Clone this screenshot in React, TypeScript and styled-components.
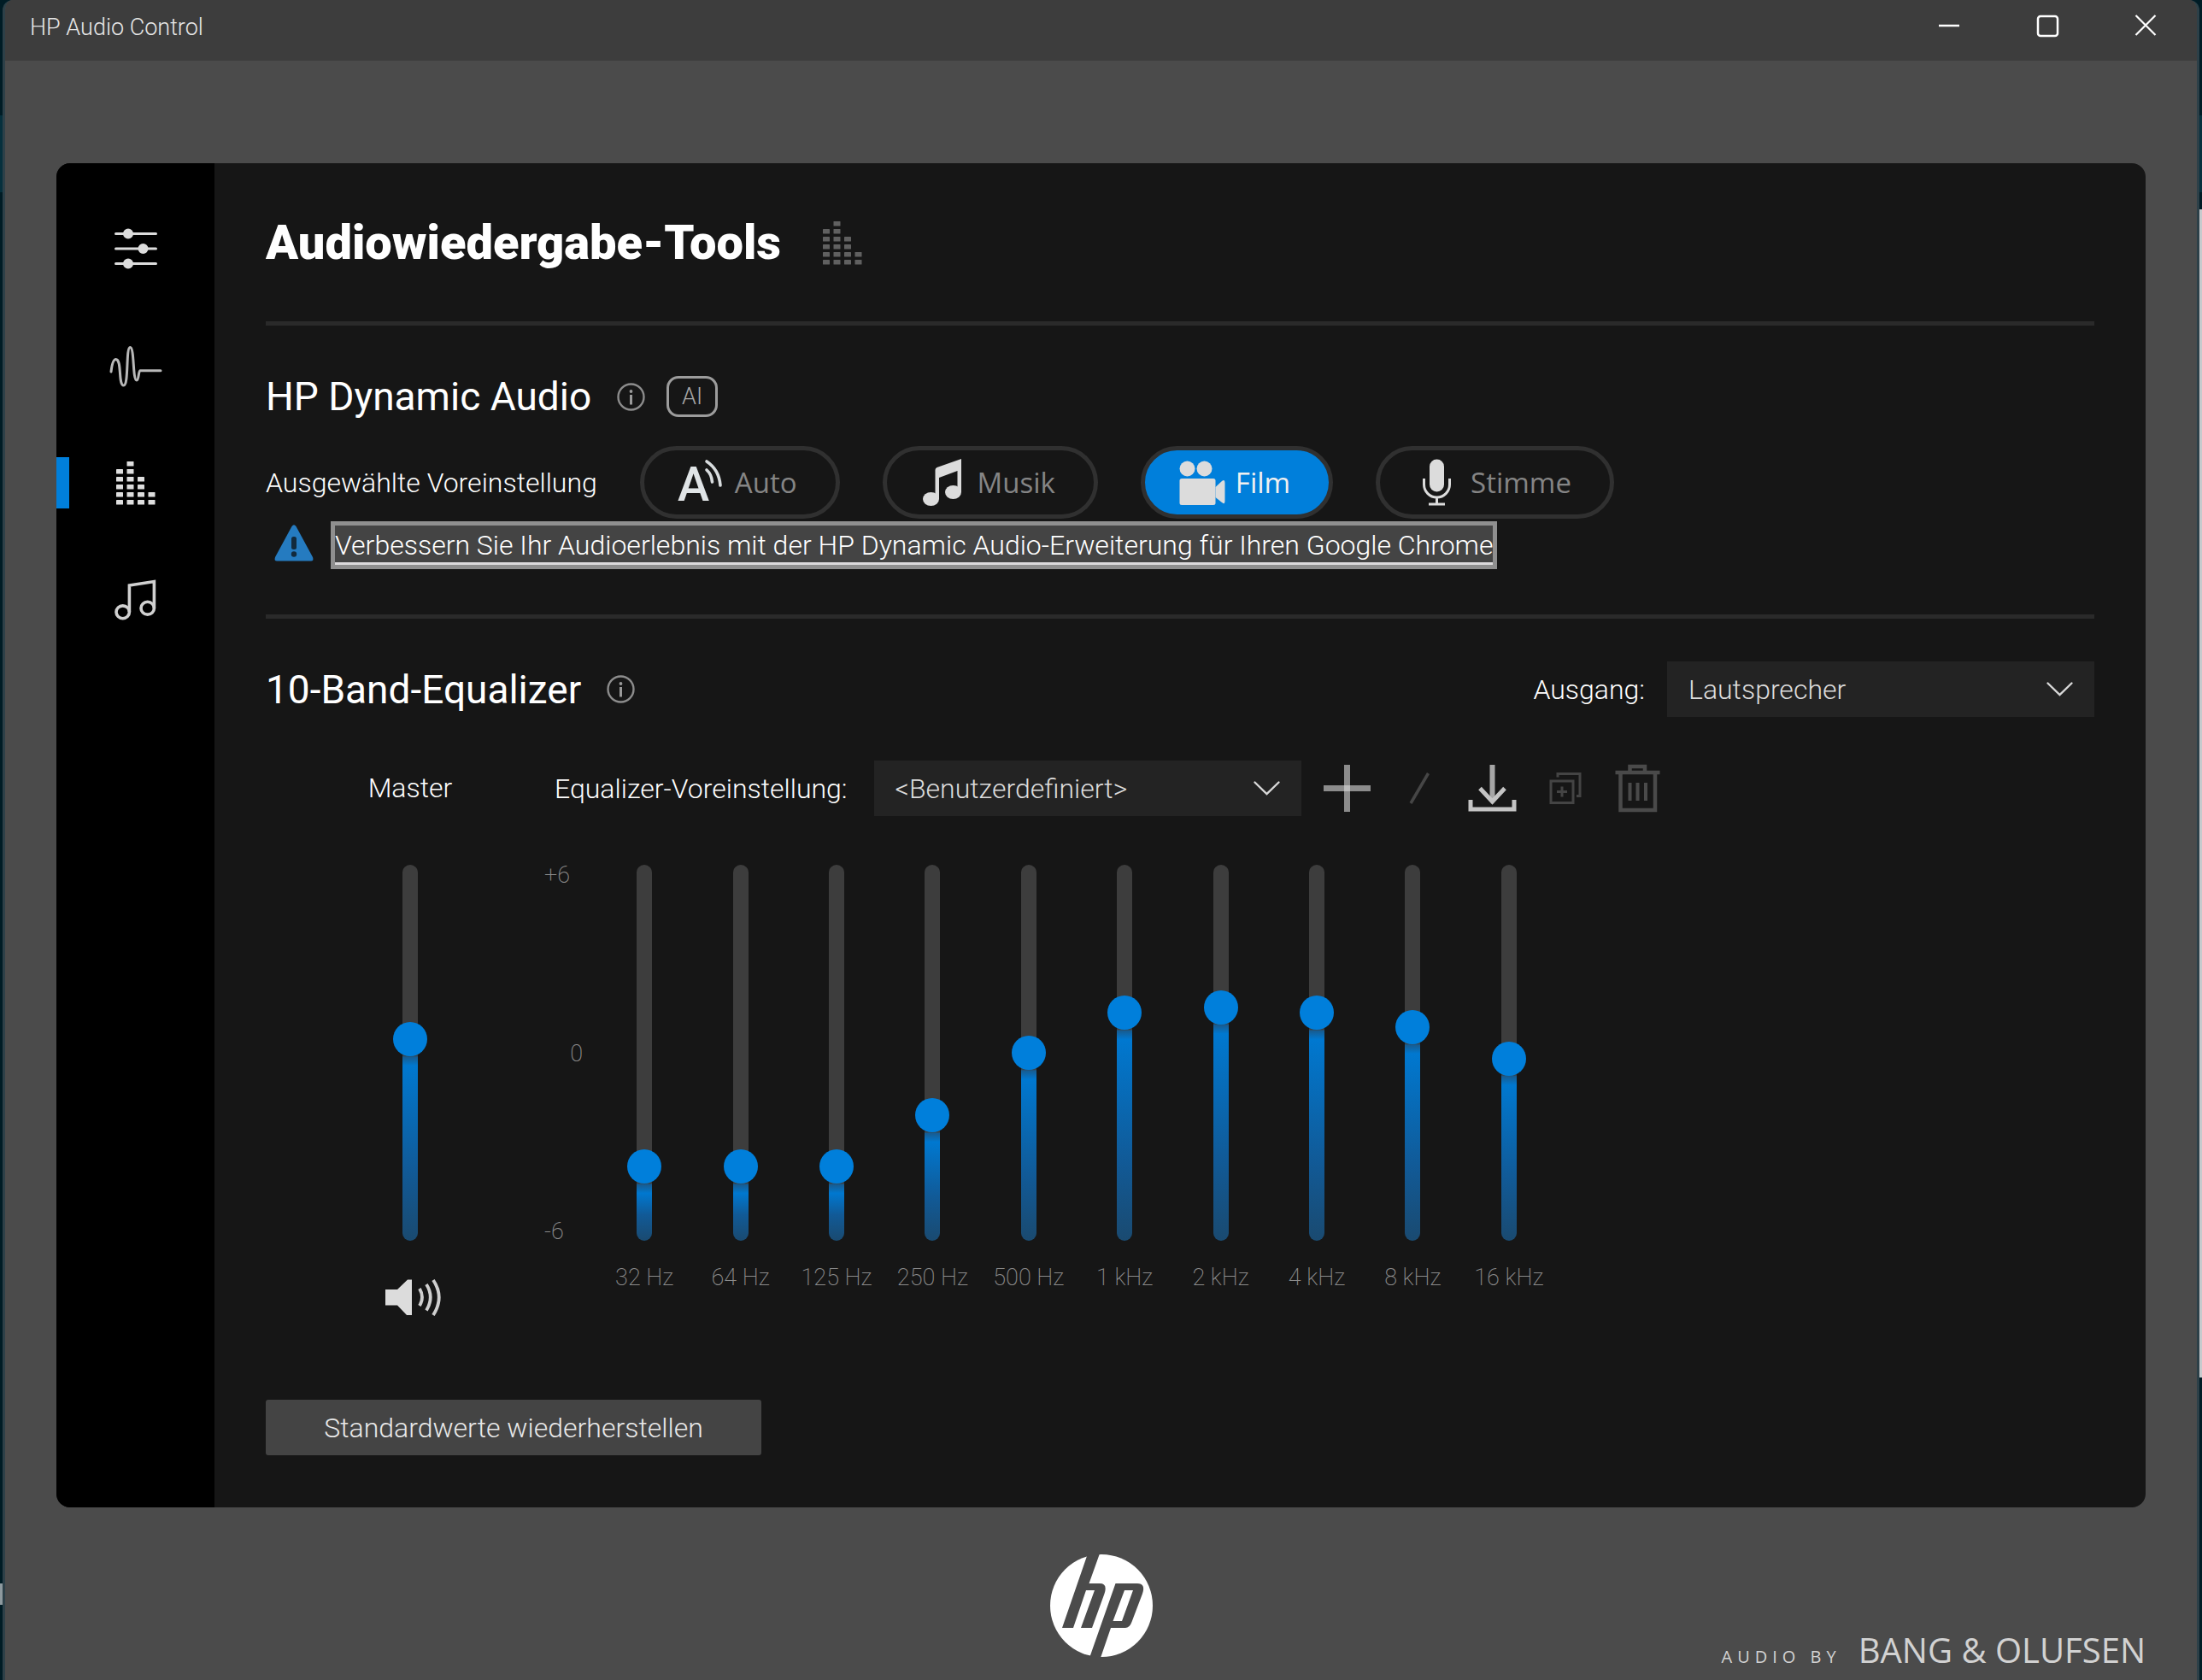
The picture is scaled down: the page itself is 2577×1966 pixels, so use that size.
import React, { useState } from "react";
import styled, { createGlobalStyle } from "styled-components";

const accent = "#007fdb";
const uiFont = `Roboto, "Noto Sans", sans-serif`;
const pillFont = `"Open Sans", "Noto Sans", sans-serif`;

const GlobalStyle = createGlobalStyle`
  *, *::before, *::after { box-sizing: border-box; }
  body { margin: 0; background: #001c25; color: #fff; font: 300 32px/40px ${uiFont}; }
  button, select { font: inherit; color: inherit; border: 0; padding: 0; margin: 0; background: none; cursor: pointer; }
  h1, h2 { margin: 0; }
  svg { display: block; flex: none; overflow: visible; }
`;

/* ---------- window frame ---------- */

const Desktop = styled.div`
  min-height: 100vh;
  display: grid;
  grid-template-columns: 3px 1fr 3px;
`;

const LeftEdge = styled.div`
  background: linear-gradient(#001c25 135px, #06303d 135px 225px, #001c25 225px 1853px, #8d999e 1853px 1878px, #001c25 1878px);
`;

const RightEdge = styled.div`
  background: linear-gradient(#001c25 135px, #06303d 135px 225px, #001c25 225px 245px, #c6cacd 245px 1612px, #001c25 1612px);
`;

const Window = styled.div`
  display: flex;
  flex-direction: column;
  min-width: 0;
  background: #4b4b4b;
  border: solid #2d4048;
  border-width: 0 3px;
  border-radius: 12px 12px 0 0;
  overflow: hidden;
`;

const TitleBar = styled.header`
  display: flex;
  justify-content: space-between;
  align-items: flex-start;
  height: 71px;
  padding: 0 3px 0 29px;
  background: #3d3d3d;
`;

const WindowTitle = styled.span`
  font-size: 27px;
  line-height: 64px;
  color: #e6e6e6;
`;

const WindowButtons = styled.div`
  display: flex;
`;

const WindowButton = styled.button`
  display: grid;
  place-items: center;
  width: 115px;
  height: 60px;
`;

const Panel = styled.div`
  flex: 1;
  display: flex;
  margin: 120px 60px 0;
  border-radius: 16px;
  overflow: hidden;
  background: #161616;
`;

/* ---------- sidebar ---------- */

const Sidebar = styled.nav`
  flex: none;
  width: 185px;
  padding-top: 31px;
  background: #000;
`;

const NavButton = styled.button<{ $active?: boolean }>`
  display: flex;
  align-items: center;
  justify-content: center;
  width: 100%;
  height: 137px;
  background: ${(p) => (p.$active ? `linear-gradient(${accent}, ${accent}) left center / 15px 60px no-repeat` : "none")};
`;

/* ---------- content ---------- */

const Main = styled.main`
  flex: 1;
  min-width: 0;
  padding: 0 60px 60px;
`;

const PageHeader = styled.div`
  display: flex;
  align-items: center;
  gap: 49px;
  height: 185px;
`;

const PageTitle = styled.h1`
  font-size: 56px;
  line-height: 64px;
  font-weight: 900;
`;

const Divider = styled.hr`
  height: 5px;
  margin: 0;
  border: 0;
  background: #2a2a2a;
`;

const DynamicSection = styled.section`
  padding: 55px 0 53px;
`;

const EqualizerSection = styled.section`
  padding-top: 50px;
`;

const HeadingRow = styled.div`
  display: flex;
  align-items: center;
`;

const SectionTitle = styled.h2`
  margin-right: 30px;
  font-size: 46px;
  line-height: 56px;
  font-weight: 400;
`;

const InfoButton = styled.button`
  width: 33px;
  height: 33px;
`;

const AiBadge = styled.span`
  display: grid;
  place-items: center;
  width: 60px;
  height: 48px;
  margin-left: 25px;
  border: 3px solid #9c9c9c;
  border-radius: 14px;
  font-size: 27px;
  color: #a8a8a8;
`;

const PresetRow = styled.div`
  display: flex;
  align-items: center;
  gap: 50px;
  margin-top: 30px;
`;

const PresetPill = styled.button<{ $active?: boolean }>`
  display: flex;
  align-items: center;
  gap: 10px;
  height: 85px;
  padding: 0 45px 0 40px;
  border: 5px solid #303030;
  border-radius: 43px;
  background: ${(p) => (p.$active ? accent : "transparent")};
  color: ${(p) => (p.$active ? "#f0f0f0" : "#858585")};
  font-family: ${pillFont};
  font-size: 33px;
  font-weight: 400;
`;

const NoticeRow = styled.div`
  display: flex;
  align-items: center;
  gap: 20px;
  margin-top: 3px;
  padding-left: 10px;
`;

const NoticeLink = styled.a`
  padding-top: 5px;
  border: 5px solid #8f8f8f;
  background: #444;
  color: #fff;
  text-decoration: none;
`;

const NoticeText = styled.span`
  display: block;
  padding-bottom: 1px;
  border-bottom: 3px solid #dcdadc;
  line-height: 37px;
`;

/* ---------- equalizer ---------- */

const OutputField = styled.div`
  display: flex;
  align-items: center;
  gap: 21px;
  margin-left: auto;
`;

const FieldLabel = styled.label`
  margin-right: 5px;
  color: #fff;
`;

const SelectBox = styled.div`
  display: grid;
  align-items: center;
  width: 500px;
  height: 65px;
  background: #232323;

  > * { grid-area: 1 / 1; }
  > svg { justify-self: end; margin-right: 25px; pointer-events: none; }
`;

const Select = styled.select`
  appearance: none;
  width: 100%;
  height: 100%;
  padding: 0 70px 0 25px;
  color: #dcdcdc;

  option { background: #232323; }
`;

const Equalizer = styled.div`
  display: flex;
  margin-top: 51px;
`;

const MasterColumn = styled.div`
  flex: none;
  display: flex;
  flex-direction: column;
  align-items: center;
  width: 326px;
  padding-left: 12px;
`;

const MasterLabel = styled.label`
  margin-bottom: 57px;
  line-height: 65px;
`;

const MuteButton = styled.button`
  margin-top: 45px;
`;

const BandColumn = styled.div`
  flex: none;
`;

const PresetTools = styled.div`
  display: flex;
  align-items: center;
  gap: 26px;
  padding-left: 12px;
`;

const ToolButtons = styled.div`
  display: flex;
  gap: 30px;
`;

const ToolButton = styled.button`
  width: 55px;
  height: 55px;
`;

const BandArea = styled.div`
  display: flex;
  align-items: flex-start;
  gap: 16px;
  margin-top: 54px;
`;

const DecibelScale = styled.div`
  display: flex;
  flex-direction: column;
  justify-content: space-between;
  width: 45px;
  height: 447px;
  font-size: 27px;
  line-height: 30px;
  font-weight: 200;
  color: #8c8c8c;
`;

const ZeroMark = styled.span`
  align-self: flex-end;
`;

const Bands = styled.div`
  display: grid;
  grid-template-columns: repeat(10, 1fr);
  width: 1124px;
  padding-top: 3px;
`;

const Band = styled.div`
  display: flex;
  flex-direction: column;
  align-items: center;
  gap: 28px;
`;

const BandLabel = styled.label`
  font-size: 27px;
  line-height: 30px;
  font-weight: 200;
  color: #8c8c8c;
  white-space: nowrap;
`;

const VerticalSlider = styled.input`
  --level: calc(20px + var(--ratio) * 400px);
  appearance: none;
  writing-mode: vertical-lr;
  direction: rtl;
  width: 40px;
  height: 440px;
  margin: 0;
  background: none;
  cursor: pointer;

  &::-webkit-slider-runnable-track {
    width: 18px;
    height: 440px;
    border-radius: 9px;
    background: linear-gradient(
      to top,
      #1a4a70 0,
      #115a97 calc(var(--level) * 0.35),
      #0078d0 calc(var(--level) - 31px),
      #175c91 calc(var(--level) - 21px),
      #3d3d3d calc(var(--level) - 19px)
    );
  }

  &::-webkit-slider-thumb {
    appearance: none;
    width: 40px;
    height: 40px;
    margin-left: -11px;
    border-radius: 50%;
    background: ${accent};
  }
`;

const ResetButton = styled.button`
  width: 580px;
  height: 65px;
  margin-top: 98px;
  border-radius: 3px;
  background: #444;
  color: #e8e8e8;
`;

/* ---------- footer ---------- */

const Footer = styled.footer`
  display: grid;
  grid-template-columns: 1fr auto 1fr;
  height: 202px;
  padding: 55px 60px 0;
`;

const Brand = styled.div`
  grid-column: 3;
  align-self: end;
  justify-self: end;
  display: flex;
  align-items: baseline;
  gap: 20px;
  font-family: ${pillFont};
  font-weight: 400;
  font-size: 40px;
  line-height: 54px;
  color: #d2d2d2;
  white-space: nowrap;
`;

const BrandPrefix = styled.span`
  font-size: 20px;
  letter-spacing: 6px;
`;

const LogoSlot = styled.div`
  grid-column: 2;
`;

/* ---------- drawings ---------- */

const SlidersIcon = () => (
  <svg width="64" height="64" viewBox="0 0 64 64" fill="#dcdcdc" stroke="#dcdcdc" strokeWidth="3" strokeLinecap="round">
    <path d="M8.500 14.400H55.500M8.500 32H55.500M8.500 49.600H55.500" />
    <circle cx="23" cy="14.400" r="4.500" />
    <circle cx="40.500" cy="32" r="4.500" />
    <circle cx="23" cy="49.600" r="4.500" />
  </svg>
);

const WaveIcon = () => (
  <svg width="64" height="64" viewBox="0 0 64 64" fill="none" stroke="#b8b8b8" strokeWidth="3" strokeLinecap="round">
    <path d="M3 39C4 30 6 24.500 8.600 24.500C16 24.500 11 55 17.700 55C24 55 20 10.500 25.300 10.500C30.500 10.500 28 49 33 49C35.500 49 35 38 37 37.700H61" />
  </svg>
);

const levels = [5, 6, 4, 2];

const BarsIcon = ({ color }: { color: string }) => (
  <svg width="46" height="52" viewBox="0 0 46 52" fill={color}>
    {levels.map((count, c) =>
      Array.from({ length: count }, (_, r) => (
        <rect key={`${c}-${r}`} x={c * 12.5} y={46 - r * 9} width="8" height="5.6" rx="0.6" />
      ))
    )}
  </svg>
);

const NotesIcon = () => (
  <svg width="64" height="64" viewBox="0 0 64 64" fill="none" stroke="#d0d0d0" strokeWidth="3.600">
    <ellipse cx="16.700" cy="46.300" rx="7.700" ry="7.400" />
    <ellipse cx="45.700" cy="41.700" rx="7.700" ry="7.400" />
    <path d="M24.400 46V15L53.400 10.500V42" />
  </svg>
);

const InfoIcon = () => (
  <svg width="33" height="33" viewBox="0 0 33 33">
    <circle cx="16.500" cy="16.500" r="15" fill="none" stroke="#8c8c8c" strokeWidth="2.400" />
    <circle cx="16.500" cy="10" r="1.900" fill="#9a9a9a" />
    <rect x="15" y="14" width="3" height="11.500" fill="#9a9a9a" />
  </svg>
);

const AutoIcon = () => (
  <svg width="56" height="56" viewBox="0 0 56 56">
    <text x="-1" y="49" fontFamily="Roboto" fontSize="56" fontWeight="500" fill="#e0e4e6">A</text>
    <g fill="none" stroke="#d8dcde" strokeWidth="3.600" strokeLinecap="round">
      <path d="M33 13C36.500 16 39 21 39.500 27" />
      <path d="M33 3C42 9 48 19 49 31" />
    </g>
  </svg>
);

const MusicIcon = () => (
  <svg width="56" height="56" viewBox="0 0 56 56" fill="#dcdcdc">
    <ellipse cx="11.500" cy="47" rx="9.500" ry="8" />
    <ellipse cx="37.500" cy="39" rx="9.500" ry="8" />
    <path d="M16.500 13Q16.500 11 18.500 10L47 0V39H42.500V14L21 22V47H16.500Z" />
  </svg>
);

const FilmIcon = () => (
  <svg width="56" height="56" viewBox="0 0 56 56" fill="#dcdcdc">
    <circle cx="9.500" cy="11.500" r="9" />
    <circle cx="29.500" cy="11.500" r="9" />
    <rect x="0.500" y="23" width="42" height="31" rx="2.500" />
    <path d="M42.500 33L50 26Q53.500 23.500 53.500 28V49Q53.500 54 50 51L42.500 45Z" />
  </svg>
);

const VoiceIcon = () => (
  <svg width="56" height="56" viewBox="0 0 56 56" fill="none" stroke="#dcdcdc" strokeWidth="3">
    <rect x="18" y="0.500" width="17" height="38" rx="8.500" fill="#dcdcdc" stroke="none" />
    <path d="M11.500 23V30A15 15 0 0 0 41.500 30V23M26.500 45V53M17 53H36" />
  </svg>
);

const WarningIcon = () => (
  <svg width="46" height="50" viewBox="0 0 46 50">
    <path d="M20.500 3Q23 -0.500 25.500 3L45 39Q46.500 43.500 43 43.500H3Q-0.500 43.500 1 39Z" fill="#257bc0" />
    <rect x="20" y="15" width="6" height="15" rx="2.500" fill="#122a3d" />
    <circle cx="23" cy="35.500" r="3.200" fill="#122a3d" />
  </svg>
);

const ChevronIcon = () => (
  <svg width="31" height="17" viewBox="0 0 31 17" fill="none" stroke="#d8d8d8" strokeWidth="2.400" strokeLinecap="round">
    <path d="M1.500 1.500L15.500 15L29.500 1.500" />
  </svg>
);

const PlusIcon = () => (
  <svg width="55" height="55" viewBox="0 0 55 55">
    <path d="M27.500 0V55M0 27.500H55" stroke="#8c8c8c" strokeWidth="7" />
    <rect x="24" y="24" width="7" height="7" fill="#bcbcbc" />
  </svg>
);

const EditIcon = () => (
  <svg width="55" height="55" viewBox="0 0 55 55" stroke="#464646" strokeWidth="3.500">
    <path d="M17 45L37.500 10" />
  </svg>
);

const DownloadIcon = () => (
  <svg width="55" height="55" viewBox="0 0 55 55" fill="none" stroke="#c4c4c4">
    <path d="M27.500 0V43" strokeWidth="6" stroke="#a6a6a6" />
    <path d="M13 27.500L27.500 43L42 27.500" strokeWidth="5" />
    <path d="M2 41V52H53V41" strokeWidth="5" />
  </svg>
);

const DuplicateIcon = () => (
  <svg width="55" height="55" viewBox="0 0 55 55" fill="none" stroke="#444" strokeWidth="3">
    <rect x="11" y="19" width="26" height="25.500" />
    <path d="M19 14.500V10.500H45V36.500H41M24 25.500V37.500M18 31.500H30" />
  </svg>
);

const TrashIcon = () => (
  <svg width="55" height="55" viewBox="0 0 55 55" fill="none" stroke="#4a4a4a" strokeWidth="4.500">
    <path d="M1.500 9H53.500M18.500 9V2H36V9M7.500 9V53H48V9" />
    <path d="M18.500 21V42M27.500 21V42M37 21V42" strokeWidth="4" />
  </svg>
);

const SpeakerIcon = () => (
  <svg width="76" height="43" viewBox="-9 0 76 43">
    <path d="M0 12H14L26 0.500H31V42H25L14 30.500H0Z" fill="#dcdcdc" />
    <g fill="none" stroke="#cfcfcf" strokeWidth="3.800">
      <path d="M40 11Q46 21 40 31" />
      <path d="M48 6Q57.500 21 48 36.500" />
      <path d="M56 1Q69.500 21 56 42" />
    </g>
  </svg>
);

const HpLogo = () => (
  <svg width="120" height="120" viewBox="0 0 120 120" role="img" aria-label="HP">
    <circle cx="60" cy="60" r="60" fill="#fff" />
    <g fill="#4b4b4b">
      <path d="M44 -1L14 86H27L42 42H52L36 86H49L63.500 46Q67.500 34 58 34H45.500L58 -1Z" />
      <path
        fillRule="evenodd"
        d="M76.500 34L46 121H59L71 86H88Q93 86 95.500 79L108 46Q112 34 102 34ZM87 42H97L84 78H73.500Z"
      />
    </g>
  </svg>
);

/* ---------- data ---------- */

const presets = [
  { name: "Auto", Icon: AutoIcon },
  { name: "Musik", Icon: MusicIcon },
  { name: "Film", Icon: FilmIcon },
  { name: "Stimme", Icon: VoiceIcon },
];

const tools = [
  { name: "Hinzufügen", Icon: PlusIcon },
  { name: "Bearbeiten", Icon: EditIcon },
  { name: "Speichern", Icon: DownloadIcon },
  { name: "Duplizieren", Icon: DuplicateIcon },
  { name: "Löschen", Icon: TrashIcon },
];

const bandNames = ["32 Hz", "64 Hz", "125 Hz", "250 Hz", "500 Hz", "1 kHz", "2 kHz", "4 kHz", "8 kHz", "16 kHz"];
const defaultGains = [-4, -4, -4, -2.2, 0, 1.4, 1.6, 1.4, 0.9, -0.2];

type SliderProps = { id: string; min: number; max: number; step: number; value: number; onValue: (v: number) => void };

const Slider = ({ id, min, max, step, value, onValue }: SliderProps) => (
  <VerticalSlider
    id={id}
    type="range"
    min={min}
    max={max}
    step={step}
    value={value}
    onChange={(e) => onValue(Number(e.target.value))}
    style={{ "--ratio": (value - min) / (max - min) } as React.CSSProperties}
  />
);

export default function App() {
  const [preset, setPreset] = useState("Film");
  const [master, setMaster] = useState(54);
  const [gains, setGains] = useState(defaultGains);

  return (
    <>
      <GlobalStyle />
      <Desktop>
        <LeftEdge />
        <Window>
          <TitleBar>
            <WindowTitle>HP Audio Control</WindowTitle>
            <WindowButtons>
              <WindowButton aria-label="Minimieren">
                <svg width="26" height="26" viewBox="0 0 26 26" stroke="#fff" strokeWidth="2.500">
                  <path d="M1 13H25" />
                </svg>
              </WindowButton>
              <WindowButton aria-label="Maximieren">
                <svg width="26" height="26" viewBox="0 0 26 26" stroke="#fff" strokeWidth="2.500" fill="none">
                  <rect x="2" y="2" width="23" height="23" rx="3" />
                </svg>
              </WindowButton>
              <WindowButton aria-label="Schließen">
                <svg width="26" height="26" viewBox="0 0 26 26" stroke="#fff" strokeWidth="2.200">
                  <path d="M1.500 1L24.500 24M24.500 1L1.500 24" />
                </svg>
              </WindowButton>
            </WindowButtons>
          </TitleBar>

          <Panel>
            <Sidebar>
              <NavButton aria-label="Regler"><SlidersIcon /></NavButton>
              <NavButton aria-label="Rauschunterdrückung"><WaveIcon /></NavButton>
              <NavButton $active aria-label="Equalizer"><BarsIcon color="#dedede" /></NavButton>
              <NavButton aria-label="Klänge"><NotesIcon /></NavButton>
            </Sidebar>

            <Main>
              <PageHeader>
                <PageTitle>Audiowiedergabe-Tools</PageTitle>
                <BarsIcon color="#606060" />
              </PageHeader>
              <Divider />

              <DynamicSection>
                <HeadingRow>
                  <SectionTitle>HP Dynamic Audio</SectionTitle>
                  <InfoButton aria-label="Info"><InfoIcon /></InfoButton>
                  <AiBadge>AI</AiBadge>
                </HeadingRow>
                <PresetRow>
                  <span>Ausgewählte Voreinstellung</span>
                  {presets.map(({ name, Icon }) => (
                    <PresetPill key={name} $active={preset === name} onClick={() => setPreset(name)}>
                      <Icon />
                      {name}
                    </PresetPill>
                  ))}
                </PresetRow>
                <NoticeRow>
                  <WarningIcon />
                  <NoticeLink href="#erweiterung">
                    <NoticeText>
                      Verbessern Sie Ihr Audioerlebnis mit der HP Dynamic Audio-Erweiterung für Ihren Google Chrome
                    </NoticeText>
                  </NoticeLink>
                </NoticeRow>
              </DynamicSection>
              <Divider />

              <EqualizerSection>
                <HeadingRow>
                  <SectionTitle>10-Band-Equalizer</SectionTitle>
                  <InfoButton aria-label="Info"><InfoIcon /></InfoButton>
                  <OutputField>
                    <FieldLabel htmlFor="output">Ausgang:</FieldLabel>
                    <SelectBox>
                      <Select id="output" defaultValue="Lautsprecher">
                        <option>Lautsprecher</option>
                      </Select>
                      <ChevronIcon />
                    </SelectBox>
                  </OutputField>
                </HeadingRow>

                <Equalizer>
                  <MasterColumn>
                    <MasterLabel htmlFor="master">Master</MasterLabel>
                    <Slider id="master" min={0} max={100} step={1} value={master} onValue={setMaster} />
                    <MuteButton aria-label="Stumm"><SpeakerIcon /></MuteButton>
                  </MasterColumn>

                  <BandColumn>
                    <PresetTools>
                      <FieldLabel htmlFor="eq-preset">Equalizer-Voreinstellung:</FieldLabel>
                      <SelectBox>
                        <Select id="eq-preset" defaultValue="<Benutzerdefiniert>">
                          <option>{"<Benutzerdefiniert>"}</option>
                        </Select>
                        <ChevronIcon />
                      </SelectBox>
                      <ToolButtons>
                        {tools.map(({ name, Icon }) => (
                          <ToolButton key={name} aria-label={name}><Icon /></ToolButton>
                        ))}
                      </ToolButtons>
                    </PresetTools>

                    <BandArea>
                      <DecibelScale>
                        <span>+6</span>
                        <ZeroMark>0</ZeroMark>
                        <span>-6</span>
                      </DecibelScale>
                      <Bands>
                        {bandNames.map((name, i) => (
                          <Band key={name}>
                            <Slider
                              id={`band-${i}`}
                              min={-6}
                              max={6}
                              step={0.1}
                              value={gains[i]}
                              onValue={(v) => setGains(gains.map((g, j) => (j === i ? v : g)))}
                            />
                            <BandLabel htmlFor={`band-${i}`}>{name}</BandLabel>
                          </Band>
                        ))}
                      </Bands>
                    </BandArea>
                  </BandColumn>
                </Equalizer>

                <ResetButton>Standardwerte wiederherstellen</ResetButton>
              </EqualizerSection>
            </Main>
          </Panel>

          <Footer>
            <LogoSlot><HpLogo /></LogoSlot>
            <Brand>
              <BrandPrefix>AUDIO BY</BrandPrefix>
              BANG &amp; OLUFSEN
            </Brand>
          </Footer>
        </Window>
        <RightEdge />
      </Desktop>
    </>
  );
}
